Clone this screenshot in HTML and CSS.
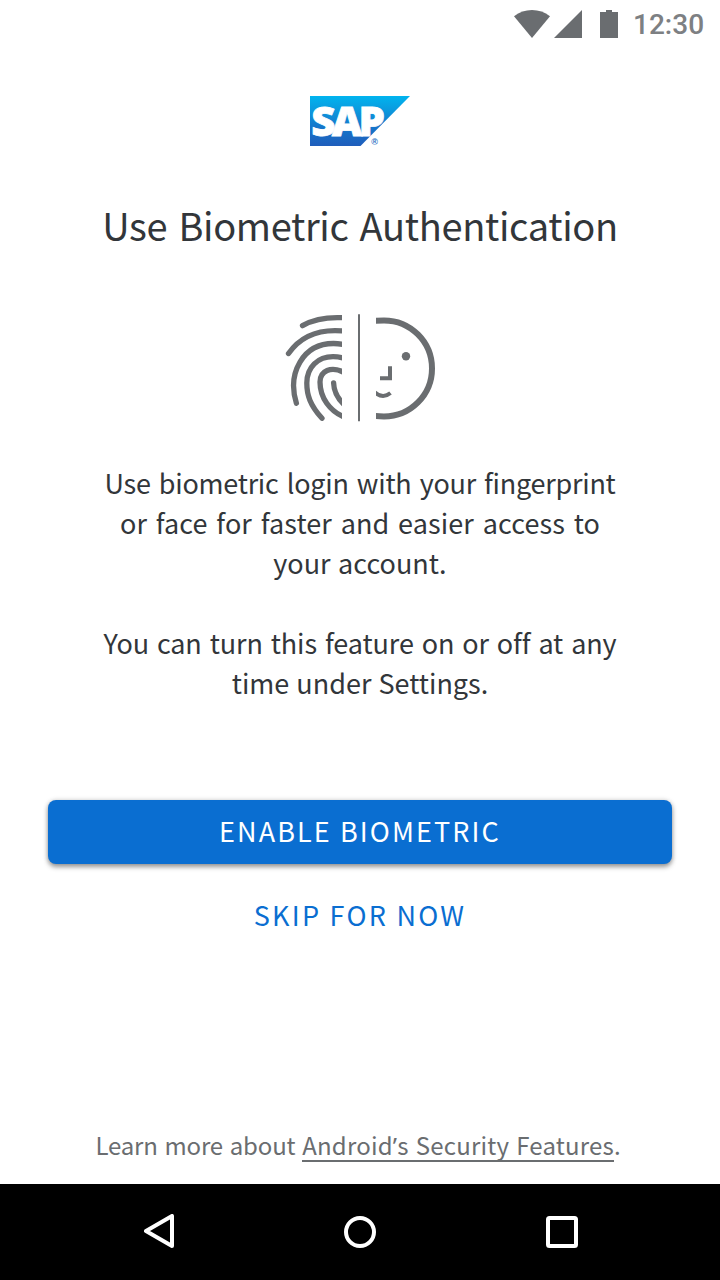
FILE: index.html
```
<!DOCTYPE html>
<html lang="en">
<head>
<meta charset="utf-8">
<title>Use Biometric Authentication</title>
<link rel="stylesheet" href="styles.css">
</head>
<body>
<div class="screen">
  <header class="status">
    <svg class="status-icons" width="104" height="28" viewBox="514 10 104 28" aria-hidden="true">
      <path d="M514 16.200Q522 10 532 10T550 16.200L532 38Z"/>
      <path d="M554 38H582V10Z"/>
      <path d="M600 12H606V10H612V12H618V38H600Z"/>
    </svg>
    <span class="clock">12:30</span>
  </header>

  <main class="content">
    <svg class="logo" width="100" height="50" viewBox="0 0 100 50" role="img" aria-label="SAP">
      <defs>
        <linearGradient id="sap" x1="0" y1="0" x2="0" y2="1">
          <stop offset="0" stop-color="#00b4ef"/>
          <stop offset=".25" stop-color="#0a9de0"/>
          <stop offset=".6" stop-color="#1578cc"/>
          <stop offset="1" stop-color="#1f5dbb"/>
        </linearGradient>
      </defs>
      <path fill="url(#sap)" d="M0 0H100L50.500 50H0Z"/>
      <text class="logo-text" x="1.300" y="39.500" textLength="70" lengthAdjust="spacingAndGlyphs">SAP</text>
      <text class="logo-mark" x="61.300" y="49">®</text>
    </svg>

    <h1 class="title">Use Biometric Authentication</h1>

    <svg class="biometric" width="152" height="110" viewBox="284 313 152 110" aria-hidden="true">
      <defs>
        <clipPath id="left-half"><path d="M284 312H342V424H284Z"/></clipPath>
        <clipPath id="right-half"><path d="M376 312H440V424H376Z"/></clipPath>
      </defs>
      <g class="finger" clip-path="url(#left-half)">
        <path d="M302.500 325.600Q319 316.300 344 317.800"/>
        <path d="M288.500 353.500C300 337 319 328.500 344 331"/>
        <path d="M296.400 403.200C287 373 303 343.500 333.500 343.500Q339 343.500 344 344.600"/>
        <path d="M322 418.300C310 405 306.800 395 306.800 383C306.800 367 318 356.600 333 356.600Q339 356.600 344 358.500"/>
        <path d="M344 417C330 411 320 398 320 382C320 371 331 365.500 344 372.500"/>
        <path d="M333.600 382.800Q334 395 344 404.500"/>
      </g>
      <path class="divider" d="M359 314.300V421.300"/>
      <g clip-path="url(#right-half)">
        <path class="face" d="M374 321.200C377 320.500 381 320.400 384 320.400A48 48 0 0 1 384 416.400C381 416.400 377 416.300 374 415.600"/>
        <circle class="eye" cx="406" cy="356.300" r="4.200"/>
        <path class="feature" d="M380 378.200H390V366.300"/>
        <path class="feature" d="M374.500 392Q382.500 399.500 390.500 393"/>
      </g>
    </svg>

    <p class="body"><span class="l1">Use biometric login with your fingerprint</span><br><span class="l2">or face for faster and easier access to</span><br><span class="l3">your account.</span></p>
    <p class="body"><span class="l4">You can turn this feature on or off at any</span><br><span class="l5">time under Settings.</span></p>

    <div class="actions">
      <button class="button primary">ENABLE BIOMETRIC</button>
      <button class="button secondary">SKIP FOR NOW</button>
    </div>

    <p class="learn">Learn more about <a class="link">Android<span class="apostrophe">’</span>s Security Features</a>.</p>
  </main>

  <nav class="navbar">
    <svg width="434" height="36" viewBox="144 1214 434 36" aria-hidden="true">
      <path d="M146 1231L172 1216V1246Z"/>
      <circle cx="360" cy="1232" r="14"/>
      <rect x="548" y="1218" width="28" height="28" rx="1.500"/>
    </svg>
  </nav>
</div>
</body>
</html>
```
FILE: styles.css
```
* { box-sizing: border-box; margin: 0; padding: 0; }
body { background: #fff; color: #32363a; font-family: "Noto Sans CJK SC", "Noto Sans", sans-serif; }
.screen { width: 720px; height: 1280px; display: flex; flex-direction: column; overflow: hidden; }

.status { height: 48px; display: flex; align-items: center; justify-content: flex-end; gap: 15px; padding-right: 16px; }
.status-icons { fill: #6a6d70; }
.clock { font: 500 28px/32px Roboto, sans-serif; color: #7d8083; width: 71px; white-space: nowrap; padding-top: 2px; }

.content { flex: 1; display: flex; flex-direction: column; align-items: center; padding-top: 48px; white-space: nowrap; }
.logo { flex: none; }
.logo-text { font: 800 40px "Open Sans", sans-serif; letter-spacing: -3.500px; fill: #fff; stroke: #fff; stroke-width: .8px; }
.logo-mark { font: 700 9px "Liberation Sans", sans-serif; fill: #2b6fc4; }
.title { font-size: 38px; line-height: 56px; font-weight: 400; margin-top: 51px; letter-spacing: -.35px; word-spacing: 3px; }
.biometric { flex: none; margin-top: 60px; }
.finger { fill: none; stroke: #6a6d70; stroke-width: 5.300px; stroke-linecap: round; }
.divider { stroke: #6a6d70; stroke-width: 2px; }
.face { fill: none; stroke: #6a6d70; stroke-width: 6px; }
.eye { fill: #6a6d70; }
.feature { fill: none; stroke: #6a6d70; stroke-width: 4px; }
.body { font-size: 27px; line-height: 40px; text-align: center; margin-top: 40px; }
.body + .body { margin-top: 40px; }
.l1 { letter-spacing: -.25px; word-spacing: 2.400px; }
.l2 { letter-spacing: .1px; word-spacing: 2.600px; }
.l3 { letter-spacing: 0; word-spacing: 1.500px; }
.l4 { letter-spacing: -.1px; word-spacing: 2px; }
.l5 { letter-spacing: 0; word-spacing: 1px; }

.actions { width: 624px; margin-top: 97px; display: flex; flex-direction: column; gap: 20px; }
.button { height: 64px; border: 0; border-radius: 8px; font: 400 27px/62px "Noto Sans CJK SC", sans-serif; padding-bottom: 2px; }
.primary { background: #0a6ed1; color: #fff; letter-spacing: 2.100px; box-shadow: 0 3px 5px rgba(0,0,0,.38), 0 0 5px rgba(0,0,0,.16); }
.secondary { background: none; color: #0a6ed1; letter-spacing: 2.250px; }

.learn { margin-top: auto; margin-bottom: 22px; margin-right: 4px; font-size: 24px; line-height: 30px; color: #6a6d70; letter-spacing: -.15px; word-spacing: 1.500px; }
.link { display: inline-block; border-bottom: 2px solid #6a6d70; letter-spacing: .2px; }
.apostrophe { font-family: "Noto Sans", sans-serif; line-height: 1; }

.navbar { height: 96px; background: #000; display: flex; align-items: center; padding-left: 144px; }
.navbar svg { fill: none; stroke: #fff; stroke-width: 4px; stroke-linejoin: round; }
```
